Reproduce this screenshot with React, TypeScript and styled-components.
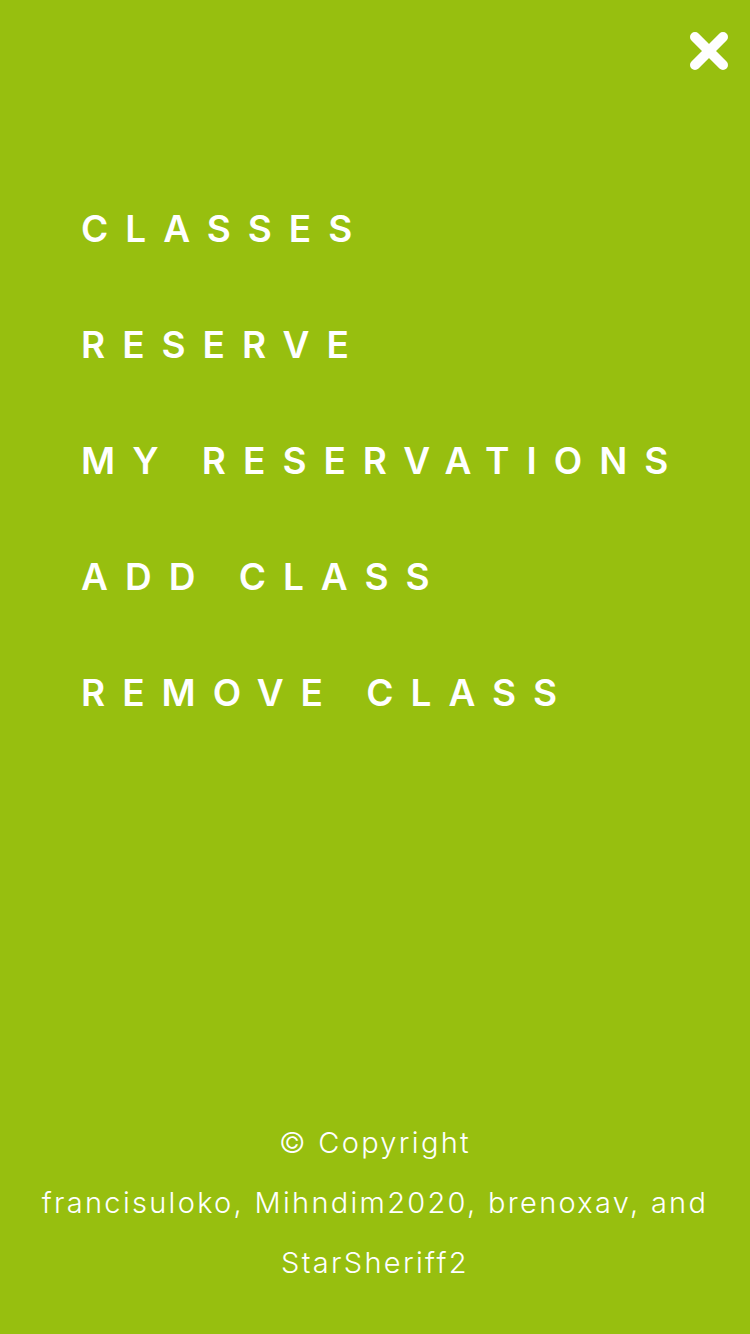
import React from "react";
import styled, { createGlobalStyle } from "styled-components";

const Global = createGlobalStyle`
  html, body { margin: 0; padding: 0; background: #97bf0f; }
  * { box-sizing: border-box; }
`;

const Page = styled.div`
  min-height: 1334px;
  background: #97bf0f;
  color: #ffffff;
  display: flex;
  flex-direction: column;
  font-family: "Inter", "Open Sans", sans-serif;
`;

const TopBar = styled.div`
  display: flex;
  justify-content: flex-end;
  padding: 29px 19px 0 0;
`;

const CloseButton = styled.button`
  width: 44px;
  height: 44px;
  padding: 0;
  border: none;
  background: transparent;
  cursor: pointer;
  display: flex;
  align-items: center;
  justify-content: center;
`;

const Nav = styled.nav`
  display: flex;
  flex-direction: column;
  padding: 104px 0 0 81px;
`;

const NavItem = styled.a`
  display: block;
  height: 116px;
  line-height: 104px;
  font-size: 37px;
  font-weight: 600;
  letter-spacing: 17px;
  color: #ffffff;
  text-decoration: none;
  white-space: nowrap;
`;

const Footer = styled.footer`
  margin-top: auto;
  padding: 0 0 41px;
  text-align: center;
  font-size: 29px;
  font-weight: 300;
  letter-spacing: 2.3px;
  line-height: 60px;
`;

const items = ["CLASSES", "RESERVE", "MY RESERVATIONS", "ADD CLASS", "REMOVE CLASS"];

export default function App() {
  return (
    <>
      <Global />
      <Page>
        <TopBar>
          <CloseButton aria-label="Close menu">
            <svg width="44" height="44" viewBox="0 0 44 44">
              <path d="M8 8 L36 36 M36 8 L8 36" stroke="#fff" strokeWidth="10" strokeLinecap="round" fill="none" />
            </svg>
          </CloseButton>
        </TopBar>
        <Nav>
          {items.map((t) => (
            <NavItem key={t} href="#">{t}</NavItem>
          ))}
        </Nav>
        <Footer>
          <div>© Copyright</div>
          <div>francisuloko, Mihndim2020, brenoxav, and</div>
          <div>StarSheriff2</div>
        </Footer>
      </Page>
    </>
  );
}
